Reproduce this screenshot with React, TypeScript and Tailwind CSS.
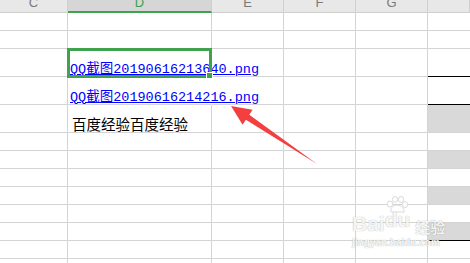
import React from 'react'

const cols = [
  { label: 'C', w: 'w-[68px]', head: 'bg-[#e8e8e8] text-[#7a7a7a] border-b border-[#cfcfcf]' },
  { label: 'D', w: 'w-[144px]', head: 'bg-[#d6d6d6] text-[#3fa34d] border-b-2 border-b-[#3fa34d]' },
  { label: 'E', w: 'w-[72px]', head: 'bg-[#e8e8e8] text-[#7a7a7a] border-b border-[#cfcfcf]' },
  { label: 'F', w: 'w-[72px]', head: 'bg-[#e8e8e8] text-[#7a7a7a] border-b border-[#cfcfcf]' },
  { label: 'G', w: 'w-[72px]', head: 'bg-[#e8e8e8] text-[#7a7a7a] border-b border-[#cfcfcf]' },
  { label: '', w: 'flex-1', head: 'bg-[#e8e8e8] text-[#7a7a7a] border-b border-[#cfcfcf]' },
]

type Row = { h: string; link?: string; text?: string; hGray?: boolean; hLine?: boolean }

const rows: Row[] = [
  { h: 'h-[18px]' },
  { h: 'h-[18px]' },
  { h: 'h-[28px]', link: 'QQ截图20190616213640.png', hLine: true },
  { h: 'h-[28px]', link: 'QQ截图20190616214216.png', hLine: true },
  { h: 'h-[28px]', text: '百度经验百度经验', hGray: true },
  { h: 'h-[18px]' },
  { h: 'h-[18px]', hGray: true },
  { h: 'h-[18px]' },
  { h: 'h-[18px]', hGray: true },
  { h: 'h-[18px]' },
  { h: 'h-[18px]', hGray: true, hLine: true },
  { h: 'h-[18px]' },
  { h: 'h-[18px]' },
]

function Watermark() {
  return (
    <div className="absolute left-[352px] top-[215px] flex flex-col items-start text-white/90 [text-shadow:0_0_1px_rgba(0,0,0,0.4)] pointer-events-none">
      <div className="flex items-end h-[19px]">
        <span className="text-[21px] font-bold leading-none font-['Liberation_Sans',sans-serif]">Bai</span>
        <div className="relative">
          <svg width="26" height="20" viewBox="0 0 26 20" className="absolute -top-[14px] -left-[1px]">
            <g fill="#fff" stroke="#cfcfcf" strokeWidth="0.8">
              <ellipse cx="6" cy="9" rx="2.6" ry="3" />
              <ellipse cx="11" cy="4.5" rx="2.6" ry="3" />
              <ellipse cx="17" cy="4.5" rx="2.6" ry="3" />
              <ellipse cx="21" cy="9.5" rx="2.6" ry="3" />
              <path d="M13 10 C8 10 6 15 7 17 L20 17 C21 15 18 10 13 10 Z" />
            </g>
          </svg>
          <span className="relative text-[21px] font-bold leading-none font-['Liberation_Sans',sans-serif]">du</span>
        </div>
        <span className="ml-[5px] text-[15px] font-bold leading-none font-['Noto_Sans_CJK_SC',sans-serif]">经验</span>
      </div>
      <span className="mt-[4px] text-[10px] font-bold leading-none font-['Liberation_Sans',sans-serif]">jingyan.baidu.com</span>
    </div>
  )
}

export default function App() {
  return (
    <div className="relative w-[470px] h-[263px] overflow-hidden bg-white font-['Liberation_Sans',sans-serif]">
      {/* column header, letters are scrolled half out of view */}
      <div className="flex h-[13px]">
        {cols.map((c, i) => (
          <div key={i} className={`${c.w} ${c.head} border-r border-r-[#cfcfcf] flex justify-center items-start overflow-hidden shrink-0`}>
            <span className="-mt-[4px] text-[13px] leading-none">{c.label}</span>
          </div>
        ))}
      </div>

      {rows.map((r, ri) => (
        <div key={ri} className={`flex ${r.h}`}>
          <div className="w-[68px] shrink-0 border-r border-b border-[#d4d4d4]" />
          <div className={`w-[144px] shrink-0 border-b border-[#d4d4d4] border-r ${r.link ? 'border-r-transparent' : 'border-r-[#d4d4d4]'} flex items-end pl-[2px] whitespace-nowrap relative z-10`}>
            {r.link && (
              <span className="text-[13.5px] leading-none text-[#0000ff] underline underline-offset-[1px] font-['Liberation_Mono','Noto_Sans_CJK_SC',monospace]">
                {r.link}
              </span>
            )}
            {r.text && (
              <span className="pb-[1px] pl-[2px] text-[14.5px] leading-none text-black font-['Noto_Sans_CJK_SC',sans-serif]">
                {r.text}
              </span>
            )}
          </div>
          <div className="w-[72px] shrink-0 border-r border-b border-[#d4d4d4]" />
          <div className="w-[72px] shrink-0 border-r border-b border-[#d4d4d4]" />
          <div className="w-[72px] shrink-0 border-r border-b border-[#d4d4d4]" />
          <div className={`flex-1 border-b ${r.hLine ? 'border-b-black' : 'border-b-[#d4d4d4]'} ${r.hGray ? 'bg-[#d9d9d9]' : ''}`} />
        </div>
      ))}

      {/* selected cell D3 */}
      <div className="absolute left-[67px] top-[48px] w-[145px] h-[30px] border-[3px] border-[#3fa34d] z-20 pointer-events-none">
        <div className="absolute -right-[4px] -bottom-[4px] w-[7px] h-[7px] bg-[#3fa34d] border border-white" />
      </div>

      <svg className="absolute left-0 top-0 z-30 pointer-events-none" width="470" height="263" viewBox="0 0 470 263">
        <polygon points="231,106 252.6,109.7 249.3,114.7 317,164 245.9,119.7 242.6,124.7" fill="#f33f3f" />
      </svg>

      <Watermark />
    </div>
  )
}
